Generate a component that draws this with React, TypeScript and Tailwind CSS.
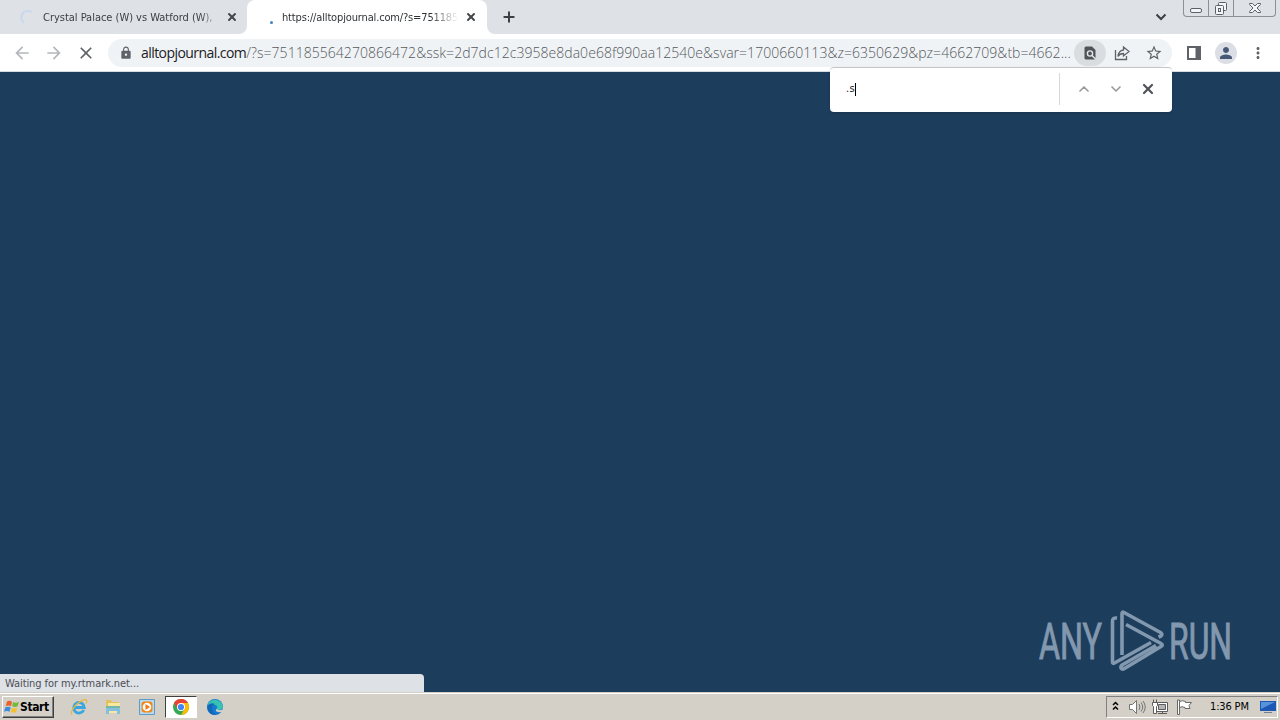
import React from 'react';
import { X, Plus, ChevronUp, ChevronDown } from 'lucide-react';
import { MdArrowBack, MdArrowForward, MdClose, MdLock, MdStarBorder, MdPerson, MdMoreVert } from 'react-icons/md';

const uiFont = "font-['DejaVu_Sans_Condensed','DejaVu_Sans',sans-serif]";

const TabStrip: React.FC = () => (
  <div className="flex h-[34px] bg-[#dee1e6]">
    {/* Background tab */}
    <div className="flex h-full w-[247px] items-center pl-[19px]">
      <svg className="h-4 w-4 shrink-0" viewBox="0 0 16 16" fill="none">
        <path d="M12.5 3.2A6.3 6.3 0 1 0 5 13.6" stroke="#c9d8ef" strokeWidth="2" />
      </svg>
      <div className="ml-2 w-[178px] shrink-0 pt-px whitespace-nowrap text-[11px] leading-4 text-[#3c4043] [mask-image:linear-gradient(to_right,black_88%,transparent)]">
        <span className="tracking-[-0.02px]">Crystal Palace (W) vs Watford (W),</span>
      </div>
      <X className="ml-[5px] h-3 w-3 shrink-0 text-[#45494d]" strokeWidth={4} />
    </div>
    {/* Active tab */}
    <div className="relative flex h-full w-[240px] items-center rounded-t-lg bg-white pl-[35px]">
      <svg className="absolute bottom-0 -left-2 h-2 w-2" viewBox="0 0 8 8">
        <path d="M8 0A8 8 0 0 1 0 8H8Z" fill="#fff" />
      </svg>
      <svg className="absolute -right-2 bottom-0 h-2 w-2" viewBox="0 0 8 8">
        <path d="M0 0A8 8 0 0 0 8 8H0Z" fill="#fff" />
      </svg>
      <div className="absolute top-[21px] left-[23px] h-[3px] w-[3px] rounded-full bg-[#3f83c8]"></div>
      <div className="w-[176px] shrink-0 pt-px whitespace-nowrap text-[11px] leading-4 text-[#303336] [mask-image:linear-gradient(to_right,black_84%,transparent)]">
        <span className="tracking-[-0.15px]">https://alltopjournal.com/?s=751185</span>
      </div>
      <X className="ml-[7px] h-3 w-3 shrink-0 text-[#45494d]" strokeWidth={4} />
    </div>
    <Plus className="mt-[9px] ml-[14px] h-4 w-4 text-[#3c4043]" strokeWidth={3} />
    <div className="ml-auto flex">
      <svg className="mt-[13px] mr-4 h-2 w-3" viewBox="0 0 12 8" fill="none">
        <path d="M1.5 1.5 6 6 10.5 1.5" stroke="#3c4043" strokeWidth="2" />
      </svg>
      <WindowButtons />
    </div>
  </div>
);

const WindowButtons: React.FC = () => (
  <div className="mr-1 flex h-[17px] w-[93px] rounded-b-[4px] border border-t-0 border-[#8b8f97] text-[#5c6068]">
    <div className="flex w-[25px] justify-center border-r border-[#8b8f97]">
      <svg className="h-4 w-6" viewBox="0 0 24 16" fill="none">
        <rect x="6.5" y="8.5" width="11" height="4" rx="1.5" fill="#f4f5f7" stroke="currentColor" />
      </svg>
    </div>
    <div className="flex w-[25px] justify-center border-r border-[#8b8f97]">
      <svg className="h-4 w-6" viewBox="0 0 24 16" fill="none" stroke="currentColor">
        <rect x="9.5" y="2.5" width="8" height="8" rx="1" fill="#f4f5f7" />
        <rect x="6.5" y="5.5" width="8" height="9" rx="1" fill="#f4f5f7" />
        <rect x="9.5" y="8.5" width="2" height="3" />
      </svg>
    </div>
    <div className="flex flex-1 justify-center">
      <svg className="h-4 w-6" viewBox="0 0 24 16" fill="none">
        <path d="M6.5 3.5h3L12 6l2.5-2.5h3v1L14 8l3.5 3.5v1h-3L12 10l-2.5 2.5h-3v-1L10 8 6.5 4.5Z" fill="#f4f5f7" stroke="currentColor" />
      </svg>
    </div>
  </div>
);

const Toolbar: React.FC = () => (
  <div className="flex h-[38px] items-center border-b border-[#d5dbe2] bg-white text-[#5f6368]">
    <div className="ml-3 flex w-24 shrink-0 gap-3">
      <MdArrowBack className="h-5 w-5 text-[#b5b7ba]" />
      <MdArrowForward className="h-5 w-5 text-[#b5b7ba]" />
      <MdClose className="h-5 w-5" />
    </div>
    {/* Address bar */}
    <div className="flex h-7 w-[1064px] shrink-0 items-center rounded-full bg-[#f0f3f5] pl-[11px]">
      <MdLock className="h-[14px] w-[14px] shrink-0" />
      <div className="ml-2 w-[933px] shrink-0 whitespace-nowrap font-['Open_Sans','Noto_Sans',sans-serif] text-[14px] leading-5 font-light text-[#55595e]">
        <span className="font-normal tracking-[-0.56px] text-[#202124]">alltopjournal.com</span>
        <span className="tracking-[0.04px]">/?s=751185564270866472&amp;ssk=2d7dc12c3958e8da0e68f990aa12540e&amp;svar=1700660113&amp;z=6350629&amp;pz=4662709&amp;tb=4662...</span>
      </div>
      <div className="flex h-[26px] w-8 shrink-0 items-center justify-center rounded-full bg-[#dadddf]">
        <svg className="h-[14px] w-[14px]" viewBox="0 0 14 14" fill="none">
          <path d="M3 .5h6l3.5 3.500V12q0 1.500-1.500 1.500H3Q1.500 13.500 1.500 12V2Q1.500.5 3 .5Z" fill="#505459" />
          <circle cx="7" cy="7.500" r="2.600" stroke="#e4e6e8" strokeWidth="1.400" />
          <path d="m9 9.500 3.500 3.500" stroke="#e4e6e8" strokeWidth="1.400" />
        </svg>
      </div>
      <svg className="ml-2 h-4 w-4 shrink-0" viewBox="0 0 16 16" fill="none" stroke="currentColor" strokeWidth="1.3">
        <path d="M1.5 5v9.500h11V11" />
        <path d="M9.5 2 15 6.500l-5.500 4.500V8.500C7 8.500 5.200 9.300 4 11.500c.3-3.500 2-6 5.500-6.500Z" />
      </svg>
      <MdStarBorder className="ml-[15px] h-[18px] w-[18px] shrink-0" />
    </div>
    <svg className="ml-[15px] h-[14px] w-[14px] shrink-0" viewBox="0 0 14 14">
      <path d="M0 0h14v14H0ZM2 2v10h6.500V2Z" fill="currentColor" fillRule="evenodd" />
    </svg>
    <div className="ml-[14px] flex h-[22px] w-[22px] shrink-0 items-center justify-center rounded-full bg-[#dbdee5]">
      <MdPerson className="h-[18px] w-[18px] text-[#4a5878]" />
    </div>
    <MdMoreVert className="ml-3 h-[18px] w-[18px] shrink-0" />
  </div>
);

const FindBar: React.FC = () => (
  <div className="absolute top-[67px] left-[830px] flex h-[45px] w-[342px] items-center rounded-[4px] border-t border-[#c6c6c8] bg-white pb-[2px] shadow-sm">
    <div className="flex h-8 w-[230px] items-center border-r border-[#d6d8da] pl-4 text-[11px] text-[#202124]">
      <span className="tracking-[0.3px]">.s</span>
      <span className="h-[13px] w-px bg-black"></span>
    </div>
    <ChevronUp className="ml-4 h-4 w-4 text-[#989b9e]" strokeWidth={2.5} />
    <ChevronDown className="ml-4 h-4 w-4 text-[#989b9e]" strokeWidth={2.5} />
    <X className="ml-4 h-4 w-4 text-[#505357]" strokeWidth={3.2} />
  </div>
);

const Watermark: React.FC = () => (
  <svg className="mr-[40px] mb-5 h-16 w-[208px] overflow-visible" viewBox="1032 608 208 64" fill="none">
    <g fill="#8298ae" stroke="#8298ae" strokeWidth="1" fontFamily="Roboto, sans-serif" fontSize="50">
      <text x="1039" y="659" textLength="63" lengthAdjust="spacingAndGlyphs">ANY</text>
      <text x="1169" y="659" textLength="63" lengthAdjust="spacingAndGlyphs">RUN</text>
    </g>
    <g stroke="#8298ae" strokeWidth="3.6" strokeLinejoin="round">
      <path d="M1122 655V613.500q0-2 2-1L1160.500 632.500q2.500 1.800.5 3.500l-2.500 1" />
      <path d="M1117 618q-4.500-.5-4.500 3V662q0 2 2 1L1151 642.500" />
      <path d="M1126 624.500 1161 643.500q2.500 1.500 0 3L1124 668.800q-2 .8-3-.8-.5-2 1.500-3.300L1156 645.500" />
    </g>
  </svg>
);

const StartButton: React.FC = () => (
  <div className="flex h-[22px] w-[52px] items-center border border-t-white border-r-[#404040] border-b-[#404040] border-l-white bg-[#d4d0c8] shadow-[inset_-1px_-1px_0_#808080]">
    <svg className="ml-px h-4 w-4 shrink-0" viewBox="0 0 16 16">
      <path d="M3 2.500q2.500-1.500 5 .2L7 7.200Q4.500 6 1.700 7Z" fill="#e8622c" />
      <path d="M9 3q2.500 1.500 6 0l-1.500 4.500q-3 1-5.300-.2Z" fill="#76b83f" />
      <path d="M1.300 8.300q3-1 5.400.2l-1.200 4.300Q3 11.500 0 12.700Z" fill="#3b8ede" />
      <path d="M8 8.700q2.500 1.200 5.200.2L12 13.300q-2.800 1-5.200-.3Z" fill="#f6c02c" />
    </svg>
    <span className="text-[12px] leading-4 font-bold tracking-[-0.4px] text-black">Start</span>
  </div>
);

const QuickLaunch: React.FC = () => (
  <div className="flex items-center">
    {/* Internet Explorer */}
    <svg className="ml-4 h-[18px] w-[18px]" viewBox="0 0 18 18" fill="none">
      <path d="M13.800 12A5.300 5.300 0 1 1 14.300 9.500H5" stroke="#3aa6e0" strokeWidth="2.800" />
      <path d="M2 16.500C-.5 14 6 5 13 2.200c4-1.500 4.500.5 3 3.300" stroke="#e5b93c" strokeWidth="1.300" />
    </svg>
    {/* Explorer */}
    <svg className="ml-4 h-[18px] w-[18px]" viewBox="0 0 18 18">
      <path d="M2 2h5l1 2h7v11H2Z" fill="#e5c15c" />
      <path d="M4 5h12v10H4Z" fill="#f8e7a0" />
      <path d="M2 8h14v2H2Z" fill="#75b6a5" />
      <path d="M2 16V11q0-1 1-1h12q1 0 1 1v5h-3v-3H5v3Z" fill="#83bfdf" />
    </svg>
    {/* Media player */}
    <svg className="ml-4 h-[18px] w-[18px]" viewBox="0 0 18 18">
      <rect x="1" y="1" width="16" height="16" rx="1" fill="#5f9bc8" />
      <rect x="2" y="2" width="14" height="14" fill="#b9d9ef" />
      <rect x="3.500" y="3.500" width="11" height="11" rx="3" fill="#f28718" />
      <circle cx="9" cy="9" r="4.300" fill="#fff" />
      <path d="M7.500 6v6l4.500-3Z" fill="#f07810" />
    </svg>
    {/* Chrome, the pressed task */}
    <div className="ml-[9px] flex h-[22px] w-8 items-center justify-center border border-t-[#404040] border-r-white border-b-white border-l-[#404040] bg-white">
      <svg className="mr-px h-4 w-4" viewBox="0 0 16 16">
        <circle cx="8" cy="8" r="8" fill="#34a853" />
        <path d="M1.070 4A8 8 0 0 1 14.930 4H8L4.500 10Z" fill="#ea4335" />
        <path d="M14.930 4A8 8 0 0 1 8 16l3.460-6L8 4Z" fill="#fbbc05" />
        <circle cx="8" cy="8" r="4" fill="#fff" />
        <circle cx="8" cy="8" r="3.100" fill="#4285f4" />
      </svg>
    </div>
    {/* Edge */}
    <svg className="ml-[10px] h-4 w-4" viewBox="0 0 16 16">
      <circle cx="8" cy="8" r="8" fill="#167bd0" />
      <path d="M.2 7A8 8 0 0 1 16 8c0 3-4.500 4-6.500 2 1.500-2 .5-4-2-4S2 6 .2 7Z" fill="#37c2b1" />
      <path d="M.2 7Q3 3 8 5q-3 1-3 4 0 5 5 6.500Q3 17 .7 11Z" fill="#1267b8" />
      <path d="M9.500 10q2.500 2 6.500.5v2q-3.500 1.500-6.500 0-1.500-1.200 0-2.500Z" fill="#d4d0c8" />
    </svg>
  </div>
);

const Tray: React.FC = () => (
  <div className="ml-auto flex h-[22px] w-[172px] items-center border border-t-[#808080] border-r-white border-b-white border-l-[#808080]">
    <svg className="ml-[5px] h-3 w-2" viewBox="0 0 8 12" fill="none" stroke="#000" strokeWidth="1.5">
      <path d="M1 4 3.500 1.500 6 4M1 8.500 3.500 6 6 8.500" />
    </svg>
    <svg className="ml-2 h-4 w-[18px]" viewBox="0 0 18 16" fill="none" stroke="#747474">
      <path d="M1.500 5.500h3l4-4v13l-4-4h-3Z" fill="#fff" />
      <path d="M11 5q2 3 0 6M13 3.500q3.500 4.500 0 9M15 2q4.500 6 0 12" />
    </svg>
    <svg className="ml-[6px] h-4 w-4" viewBox="0 0 16 16" fill="none" stroke="#5d5d5d">
      <path d="M4.500 3.500h11v9h-11Z" fill="#fff" />
      <path d="M6.500 5.500h7v5h-7Z" fill="#b4b4b4" />
      <path d="M6 14.500h9M10.500 12v2M1.500.5v3M4.500.5v3" />
      <path d="M.5 3.500h5v3l-1 1v7h-3v-7l-1-1Z" fill="#fff" />
    </svg>
    <svg className="ml-2 h-4 w-[17px]" viewBox="0 0 17 16" fill="none" stroke="#686868">
      <path d="M1.500 1v14.500h2V1Z" fill="#fff" />
      <path d="M3.500 2.500q3-1.500 6 0v1h6l-2.500 3 1 3h-5v-1q-3-1.500-5.500 0Z" fill="#fff" />
    </svg>
    <span className="ml-[17px] w-[42px] pt-px text-[11px] leading-4 tracking-[-0.15px] whitespace-nowrap text-black">1:36 PM</span>
    <svg className="ml-2 h-4 w-4 shrink-0" viewBox="0 0 16 16">
      <path d="M0 2h16v10H0Z" fill="#1c58b4" />
      <path d="M1 3h14L1 10Z" fill="#5793da" />
      <path d="M4 13h8v1H4Z" fill="#6f8196" />
    </svg>
  </div>
);

const App: React.FC = () => {
  return (
    <div className={`relative flex h-[720px] w-[1280px] flex-col overflow-hidden ${uiFont}`}>
      <TabStrip />
      <Toolbar />
      <main className="relative flex flex-1 items-end justify-end bg-[#1d3d5c]">
        <Watermark />
        <div className="absolute bottom-0 left-0 h-[18px] w-[424px] rounded-tr-[4px] bg-[#dee1e6] pt-px pl-[5px] text-[11px] leading-[18px] tracking-[-0.08px] text-[#4b4e53]">
          Waiting for my.rtmark.net...
        </div>
      </main>
      <footer className="flex h-7 shrink-0 items-center border-t border-[#d4d0c8] bg-[#d4d0c8] px-[2px] shadow-[inset_0_1px_0_#fff]">
        <StartButton />
        <QuickLaunch />
        <Tray />
      </footer>
      <FindBar />
    </div>
  );
};

export default App;
